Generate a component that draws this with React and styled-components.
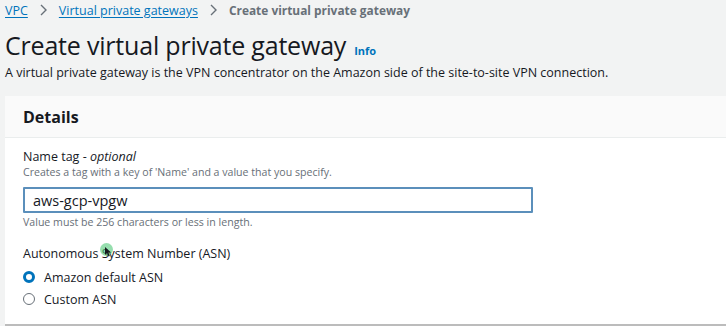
import React from "react";
import styled, { createGlobalStyle } from "styled-components";

const colors = {
  page: "#f2f3f3",
  text: "#16191f",
  grey: "#687078",
  link: "#0073bb",
  border: "#eaeded",
  input: "#5b8fbb",
};

const GlobalStyle = createGlobalStyle`
  body {
    margin: 0;
    background: ${colors.page};
    font-family: "Open Sans", "Noto Sans", sans-serif;
    color: ${colors.text};
  }
`;

const Page = styled.div`
  width: 726px;
  height: 326px;
  overflow: hidden;
  padding-left: 5px;
  box-sizing: border-box;
`;

const Breadcrumbs = styled.nav`
  display: flex;
  align-items: center;
  height: 20px;
  font-size: 12.5px;
  gap: 12px;

  a {
    color: ${colors.link};
    text-decoration: underline;
    text-underline-offset: 2px;
  }

  .current {
    color: ${colors.grey};
    font-weight: bold;
    font-size: 11.9px;
  }
`;

const Chevron = () => (
  <svg width="7" height="12" viewBox="0 0 7 12">
    <path d="M1 1l5 5-5 5" fill="none" stroke="#687078" strokeWidth="1.4" />
  </svg>
);

const TitleRow = styled.div`
  display: flex;
  align-items: baseline;
  gap: 8px;
  margin-top: 8px;
  height: 36px;
`;

const Title = styled.h1`
  margin: 0;
  font-size: 25px;
  font-weight: normal;
  letter-spacing: -0.2px;
`;

const InfoLink = styled.a`
  color: ${colors.link};
  font-size: 11px;
  font-weight: bold;
`;

const Description = styled.p`
  margin: 0;
  font-size: 12.5px;
  line-height: 18px;
`;

const Card = styled.section`
  margin-top: 14px;
  background: #fff;
  box-shadow: 0 2px 0 #bcbcbc;
  height: 228px;
`;

const CardHeader = styled.header`
  background: #fafafa;
  border-bottom: 1px solid ${colors.border};
  height: 41px;
  display: flex;
  align-items: center;
  padding-left: 18px;
  font-size: 16px;
  font-weight: bold;
`;

const CardBody = styled.div`
  padding: 11px 18px 0;
  display: flex;
  flex-direction: column;
`;

const Label = styled.div`
  font-size: 12.5px;
  line-height: 16px;

  em {
    font-style: italic;
  }
`;

const Hint = styled.div`
  color: ${colors.grey};
  font-size: 10.6px;
  line-height: 15px;
  margin-top: ${(p) => p.gap || 0}px;
`;

const Input = styled.input`
  display: block;
  width: 510px;
  height: 26px;
  box-sizing: border-box;
  margin: 7px 0 0;
  border: 2px solid ${colors.input};
  border-radius: 1px;
  padding: 0 8px;
  font-family: inherit;
  font-size: 14.5px;
  color: ${colors.text};
  outline: none;
`;

const Field = styled.div`
  margin-top: ${(p) => p.gap || 0}px;
  position: relative;
`;

const RadioGroup = styled.div`
  margin-top: 4px;
`;

const RadioRow = styled.label`
  display: flex;
  align-items: center;
  gap: 9px;
  height: 22px;
  font-size: 12.5px;
`;

const RadioDot = styled.span`
  width: 12px;
  height: 12px;
  box-sizing: border-box;
  border-radius: 50%;
  border: ${(p) => (p.checked ? `3.5px solid ${colors.link}` : "1px solid #687078")};
  background: #fff;
`;

const Cursor = styled.span`
  position: absolute;
  left: 77px;
  top: -3px;
  width: 13px;
  height: 13px;
  border-radius: 50%;
  background: rgba(80, 200, 120, 0.6);
`;

const Arrow = styled.svg`
  position: absolute;
  left: 82px;
  top: 1px;
`;

const App = () => {
  return (
    <Page>
      <GlobalStyle />
      <Breadcrumbs>
        <a>VPC</a>
        <Chevron />
        <a>Virtual private gateways</a>
        <Chevron />
        <span className="current">Create virtual private gateway</span>
      </Breadcrumbs>
      <TitleRow>
        <Title>Create virtual private gateway</Title>
        <InfoLink>Info</InfoLink>
      </TitleRow>
      <Description>
        A virtual private gateway is the VPN concentrator on the Amazon side of the site-to-site VPN connection.
      </Description>
      <Card>
        <CardHeader>Details</CardHeader>
        <CardBody>
          <Field>
            <Label>
              Name tag - <em>optional</em>
            </Label>
            <Hint gap={0}>Creates a tag with a key of 'Name' and a value that you specify.</Hint>
            <Input defaultValue="aws-gcp-vpgw" />
            <Hint gap={2}>Value must be 256 characters or less in length.</Hint>
          </Field>
          <Field gap={16}>
            <Label>Autonomous System Number (ASN)</Label>
            <Cursor />
            <Arrow width="7" height="10" viewBox="0 0 7 10">
              <path d="M0 0v8l2-2 1.5 3.5 1.3-.6L3.4 5.5H6z" fill="#16191f" />
            </Arrow>
            <RadioGroup>
              <RadioRow>
                <RadioDot checked />
                Amazon default ASN
              </RadioRow>
              <RadioRow>
                <RadioDot />
                Custom ASN
              </RadioRow>
            </RadioGroup>
          </Field>
        </CardBody>
      </Card>
    </Page>
  );
};

export default App;
